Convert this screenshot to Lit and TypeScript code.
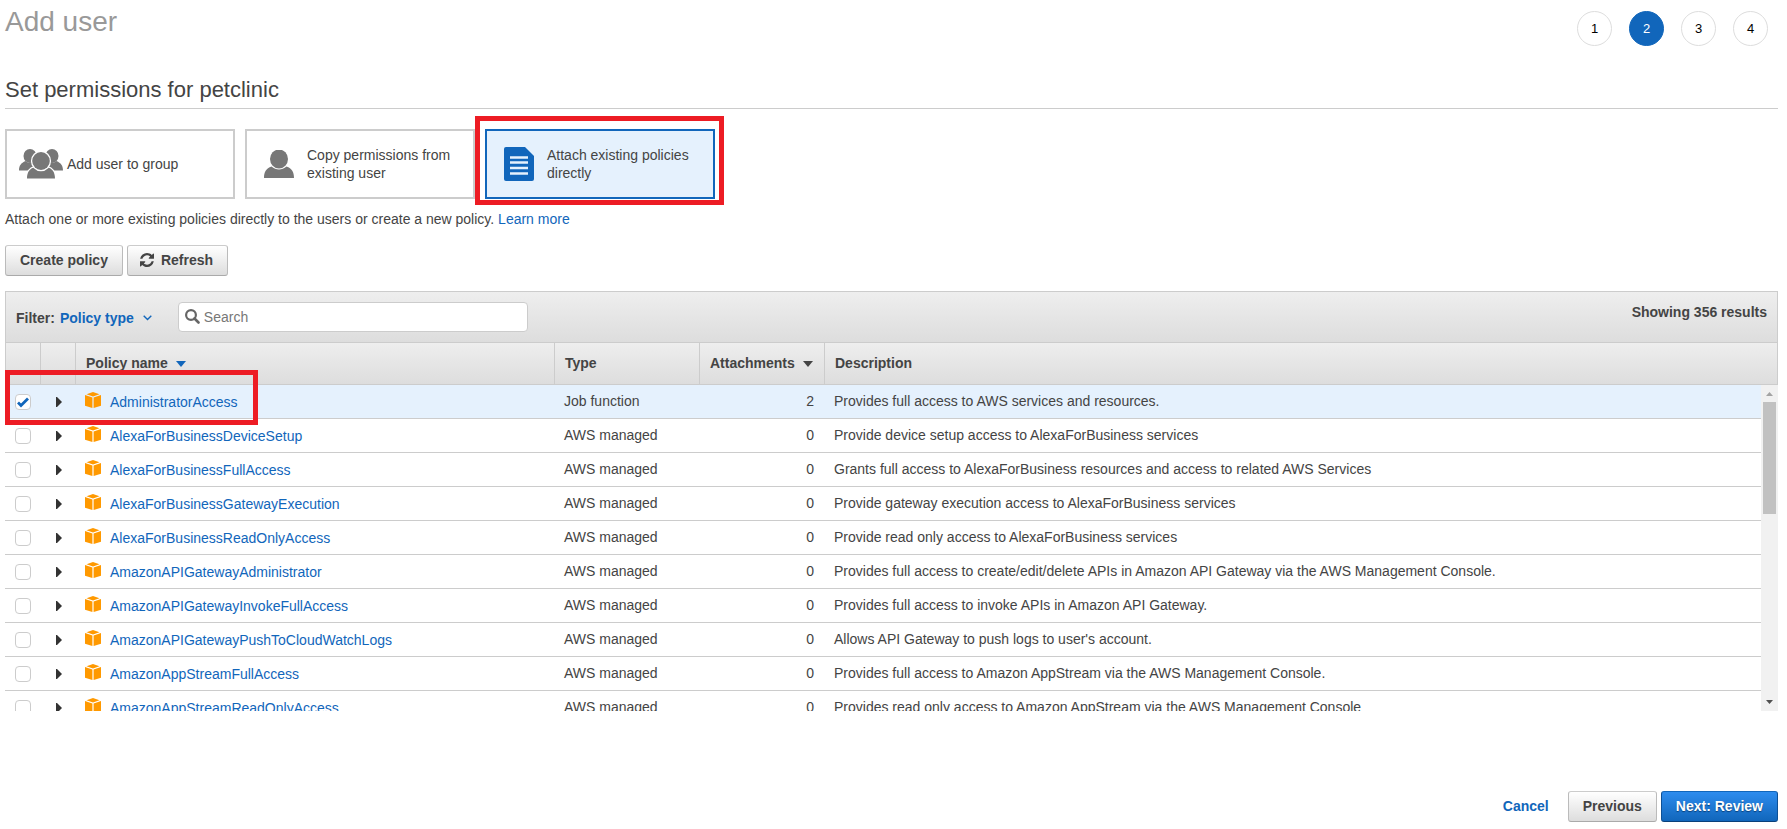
import { LitElement, html, css, svg } from "lit";
import { customElement, state } from "lit/decorators.js";
import { classMap } from "lit/directives/class-map.js";

interface Policy {
  name: string;
  type: string;
  attachments: number;
  description: string;
}

const MANAGED = "AWS managed";

const POLICIES: Policy[] = [
  { name: "AdministratorAccess", type: "Job function", attachments: 2, description: "Provides full access to AWS services and resources." },
  { name: "AlexaForBusinessDeviceSetup", type: MANAGED, attachments: 0, description: "Provide device setup access to AlexaForBusiness services" },
  { name: "AlexaForBusinessFullAccess", type: MANAGED, attachments: 0, description: "Grants full access to AlexaForBusiness resources and access to related AWS Services" },
  { name: "AlexaForBusinessGatewayExecution", type: MANAGED, attachments: 0, description: "Provide gateway execution access to AlexaForBusiness services" },
  { name: "AlexaForBusinessReadOnlyAccess", type: MANAGED, attachments: 0, description: "Provide read only access to AlexaForBusiness services" },
  { name: "AmazonAPIGatewayAdministrator", type: MANAGED, attachments: 0, description: "Provides full access to create/edit/delete APIs in Amazon API Gateway via the AWS Management Console." },
  { name: "AmazonAPIGatewayInvokeFullAccess", type: MANAGED, attachments: 0, description: "Provides full access to invoke APIs in Amazon API Gateway." },
  { name: "AmazonAPIGatewayPushToCloudWatchLogs", type: MANAGED, attachments: 0, description: "Allows API Gateway to push logs to user's account." },
  { name: "AmazonAppStreamFullAccess", type: MANAGED, attachments: 0, description: "Provides full access to Amazon AppStream via the AWS Management Console." },
  { name: "AmazonAppStreamReadOnlyAccess", type: MANAGED, attachments: 0, description: "Provides read only access to Amazon AppStream via the AWS Management Console" },
];

const groupIcon = html`<svg class="icon" width="44" height="30" viewBox="0 0 44 30" aria-hidden="true">
  ${svg`<g fill="#777">
    <ellipse cx="11" cy="7" rx="6.500" ry="7"/>
    <path d="M0 21.500c0-5 2-7.500 6.500-9.500c3 2.500 6 2.500 9 0l4 3v6.500z"/>
    <ellipse cx="33" cy="7" rx="6.500" ry="7"/>
    <path d="M44 21.500c0-5-2-7.500-6.500-9.500c-3 2.500-6 2.500-9 0l-4 3v6.500z"/>
  </g>
  <g fill="#777" stroke="#fff" stroke-width="2.600" paint-order="stroke">
    <path d="M8 29.500c0-6 2.500-10 8-11.500c4 3 8 3 12 0c5.500 1.500 8 5.500 8 11.500z"/>
    <ellipse cx="22" cy="12" rx="8.800" ry="9"/>
  </g>`}
</svg>`;

const personIcon = html`<svg class="icon" width="30" height="28" viewBox="0 0 30 28" aria-hidden="true">
  ${svg`<ellipse cx="15" cy="9" rx="9" ry="9.500" fill="#777"/>
  <path d="M0 28c0-6 2-9.500 7.500-11.500c4.500 4 10.500 4 15 0c5.500 2 7.500 5.500 7.500 11.500z" fill="#777"/>`}
</svg>`;

const documentIcon = html`<svg class="icon" width="30" height="34" viewBox="0 0 30 34" aria-hidden="true">
  ${svg`<path d="M2 0h19l9 9v23a2 2 0 0 1-2 2H2a2 2 0 0 1-2-2V2a2 2 0 0 1 2-2z" fill="#16b"/>
  <path d="M6 10.500h18M6 15.500h18M6 21h18M6 26.500h18" stroke="#e5f1fd" stroke-width="2.500"/>`}
</svg>`;

const refreshIcon = html`<svg class="refresh-icon" width="14" height="14" viewBox="0 0 1536 1536" aria-hidden="true">
  <path fill="#444" d="M1511 928q0 5-1 7-64 268-268 434.500T764 1536q-146 0-282.500-55T238 1324l-129 129q-19 19-45 19t-45-19-19-45V960q0-26 19-45t45-19h448q26 0 45 19t19 45-19 45l-137 137q71 66 161 102t187 36q134 0 250-65t186-179q11-17 53-117 8-23 30-23h192q13 0 22.500 9.500t9.500 22.500zm25-800v448q0 26-19 45t-45 19h-448q-26 0-45-19t-19-45 19-45l138-138Q969 256 768 256q-134 0-250 65T332 500q-11 17-53 117-8 23-30 23H50q-13 0-22.500-9.500T18 608v-7q65-268 270-434.500T768 0q146 0 284 55.500T1297 212l130-129q19-19 45-19t45 19 19 45z"/>
</svg>`;

const searchIcon = html`<svg class="search-icon" width="15" height="15" viewBox="0 0 15 15" aria-hidden="true">
  <circle cx="6" cy="6" r="4.900" fill="none" stroke="#666" stroke-width="2.200"/>
  <path d="M9.500 9.500l4 4" stroke="#666" stroke-width="2.600" stroke-linecap="round"/>
</svg>`;

const cubeIcon = html`<svg class="cube" width="16" height="16" viewBox="0 0 16 16" aria-hidden="true">
  <path fill="#f90" d="M8 0l6.500 2.200L8 4.400 1.500 2.200zM0 3l7.400 2.500V16L0 13.800zM16 3L8.600 5.500V16l7.400-2.200z"/>
</svg>`;

const caretIcon = html`<svg class="caret" width="10" height="6" viewBox="0 0 10 6" aria-hidden="true">
  <path fill="currentColor" d="M0 0h10L5 6z"/>
</svg>`;

@customElement("app-root")
export class AppRoot extends LitElement {
  @state() private method = 2;
  @state() private selected = new Set<string>(["AdministratorAccess"]);

  static styles = css`
    :host {
      display: block;
      box-sizing: border-box;
      padding: 5px 9px 7px 5px;
      color: #444;
      background: #fff;
      font: 14px/18px "Liberation Sans", Arial, sans-serif;
    }
    * { box-sizing: border-box; }
    h1, h2, p, ol { margin: 0; padding: 0; font-weight: normal; }
    a { color: #16b; text-decoration: none; }
    svg { flex: none; display: block; }
    button, input { font: inherit; color: inherit; margin: 0; }
    button { cursor: pointer; }

    .top { display: flex; justify-content: space-between; align-items: flex-start; }
    .title { font-size: 28px; line-height: 34px; color: #999; }
    .steps { display: flex; gap: 17px; padding: 6px 10px 0 0; list-style: none; }
    .step {
      width: 35px; height: 35px;
      display: grid; place-items: center;
      border: 1px solid #ddd; border-radius: 50%;
      font-size: 13px; color: #000;
    }
    .step.current { background: #16b; border-color: #16b; color: #fff; }

    .heading {
      margin-top: 31px; padding-bottom: 5px;
      font-size: 22px; line-height: 26px;
      border-bottom: 1px solid #ccc;
    }

    .methods { display: flex; gap: 10px; margin-top: 20px; }
    .method-slot { position: relative; }
    .method {
      display: flex; align-items: center;
      width: 230px; height: 70px; padding: 0 12px 0 17px;
      border: 2px solid #ccc; background: #fff; text-align: left;
    }
    .method.narrow { padding-left: 12px; }
    .method .label { margin-left: 13px; }
    .method.narrow .label { margin-left: 4px; }
    .method.active { border-color: #16b; background: #e5f1fd; }
    .mark { position: absolute; border: 5px solid #ed1c24; pointer-events: none; z-index: 1; }
    .mark.around-method { inset: -13px -9px -6px -10px; }
    .mark.around-row { left: 0; top: -15px; width: 253px; height: 55px; }

    .hint { margin-top: 11px; }
    .actions { display: flex; gap: 4px; margin-top: 17px; }
    .btn {
      display: flex; align-items: center; justify-content: center; gap: 7px;
      height: 31px; padding: 0 14px 2px;
      border: 1px solid; border-color: #ccc #bbb #aaa; border-radius: 3px;
      background: linear-gradient(#fff, #ddd);
      font-weight: bold;
    }
    .btn.with-icon { padding-left: 12px; }
    .btn.primary {
      color: #fff; border-color: #16b #0d5096 #0a407a;
      background: linear-gradient(#2d8cee, #16b);
      text-shadow: 0 1px 1px #0a407a;
    }

    .bar {
      display: flex; align-items: flex-start;
      margin-top: 15px; padding: 10px 10px 8px;
      border: 1px solid #ccc;
      background: linear-gradient(#eee, #ddd);
      font-weight: bold;
    }
    .filter { display: flex; align-items: center; height: 32px; gap: 5px; }
    .filter-type {
      display: flex; align-items: center; gap: 9px;
      padding: 0; border: 0; background: none; color: #16b; font-weight: bold;
    }
    .search {
      display: flex; align-items: center; gap: 4px;
      width: 350px; height: 30px; margin-left: 26px; padding: 0 6px;
      border: 1px solid #ccc; border-radius: 4px; background: #fff;
    }
    .search-icon { margin-bottom: 2px; }
    .search input {
      flex: 1; min-width: 0; padding: 0; border: 0; outline: 0;
      background: none; font-weight: normal;
    }
    .search input::placeholder { color: #777; opacity: 1; }
    .count { margin-left: auto; padding-top: 1px; }

    table { width: 100%; table-layout: fixed; border-collapse: separate; border-spacing: 0; }
    th, td { padding: 0; text-align: left; white-space: nowrap; overflow: hidden; }
    .head { border: 1px solid #ccc; border-top: 0; background: linear-gradient(#eee, #ddd); }
    .head th { height: 41px; padding: 0 10px 2px; border-right: 1px solid #ccc; }
    .head th:last-child { border-right: 0; }
    .head .c-tick, .body .c-arrow, .head .c-arrow { width: 35px; }
    .body .c-tick { width: 36px; }
    .c-name { width: 479px; }
    .c-type { width: 145px; }
    .c-att { width: 125px; }
    .th-label { display: flex; align-items: center; gap: 8px; }
    .caret { margin-top: 2px; }
    .caret-blue { color: #16b; }

    .list { position: relative; display: flex; height: 326px; }
    .scroller { flex: 1; min-width: 0; overflow-y: scroll; scrollbar-width: none; }
    .body td { height: 34px; padding: 0 10px 2px 9px; border-bottom: 1px solid #ccc; }
    .body .picked td { background: #e5f1fd; }
    .body td.c-tick, .body td.c-arrow { padding: 0; }
    .body td.c-name { padding-bottom: 0; }
    .body td.c-tick { padding-left: 10px; }
    .body td.c-att { text-align: right; padding-right: 11px; }
    .tick {
      display: block; width: 16px; height: 16px;
      appearance: none; border: 1px solid #ccc; border-radius: 4px; background: #fff;
    }
    .tick:checked {
      background: #fff url("data:image/svg+xml,%3Csvg xmlns='http://www.w3.org/2000/svg' viewBox='0 0 14 14'%3E%3Cpath d='M2 7.500l3 3L12 3.500' fill='none' stroke='%231166bb' stroke-width='2.800'/%3E%3C/svg%3E") center / 14px 14px no-repeat;
    }
    .expand { display: block; margin-left: 15px; padding: 0; border: 0; background: none; }
    .policy { display: flex; align-items: center; gap: 9px; }
    .cube { margin-bottom: 4px; }
    .policy a { padding-top: 1px; }

    .scrollbar {
      width: 17px; display: flex; flex-direction: column; align-items: center;
      background: #f1f1f1;
    }
    .scrollbar svg { width: 17px; height: 17px; }
    .track { flex: 1; width: 13px; }
    .thumb { height: 112px; background: #c1c1c1; }

    .footer { display: flex; justify-content: flex-end; align-items: center; gap: 4px; margin-top: 80px; }
    .cancel { font-weight: bold; margin-right: 15px; padding-bottom: 2px; }
  `;

  private toggle(name: string) {
    const next = new Set(this.selected);
    if (!next.delete(name)) next.add(name);
    this.selected = next;
  }

  private renderMethod(index: number, label: string, icon: unknown) {
    const active = this.method === index;
    return html`<div class="method-slot">
      <button
        class=${classMap({ method: true, active, narrow: index === 0 })}
        aria-pressed=${active ? "true" : "false"}
        @click=${() => (this.method = index)}
      >${icon}<span class="label">${label}</span></button>
      ${active ? html`<div class="mark around-method"></div>` : ""}
    </div>`;
  }

  private renderRow(p: Policy) {
    const picked = this.selected.has(p.name);
    return html`<tr class=${classMap({ picked })}>
      <td class="c-tick">
        <input class="tick" type="checkbox" aria-label=${p.name} .checked=${picked} @change=${() => this.toggle(p.name)} />
      </td>
      <td class="c-arrow">
        <button class="expand" aria-label="Expand ${p.name}">
          <svg width="6" height="10" viewBox="0 0 6 10"><path d="M0 0h1l5 5-5 5H0z" fill="#333"/></svg>
        </button>
      </td>
      <td class="c-name"><div class="policy">${cubeIcon}<a href="#">${p.name}</a></div></td>
      <td class="c-type">${p.type}</td>
      <td class="c-att">${p.attachments}</td>
      <td>${p.description}</td>
    </tr>`;
  }

  render() {
    return html`
      <header class="top">
        <h1 class="title">Add user</h1>
        <ol class="steps">
          ${[1, 2, 3, 4].map((n) => html`<li class=${classMap({ step: true, current: n === 2 })}>${n}</li>`)}
        </ol>
      </header>
      <h2 class="heading">Set permissions for petclinic</h2>
      <div class="methods">
        ${this.renderMethod(0, "Add user to group", groupIcon)}
        ${this.renderMethod(1, "Copy permissions from existing user", personIcon)}
        ${this.renderMethod(2, "Attach existing policies directly", documentIcon)}
      </div>
      <p class="hint">
        Attach one or more existing policies directly to the users or create a new policy.
        <a href="#">Learn more</a>
      </p>
      <div class="actions">
        <button class="btn">Create policy</button>
        <button class="btn with-icon">${refreshIcon}Refresh</button>
      </div>

      <div class="bar">
        <div class="filter">
          <span>Filter:</span>
          <button class="filter-type">Policy type
            <svg width="9" height="6" viewBox="0 0 9 6" aria-hidden="true">
              <path d="M.7.8l3.800 3.800L8.300.8" fill="none" stroke="#16b" stroke-width="1.400"/>
            </svg>
          </button>
        </div>
        <label class="search">
          ${searchIcon}
          <input type="text" placeholder="Search" aria-label="Search" />
        </label>
        <span class="count">Showing 356 results</span>
      </div>
      <div class="head">
        <table>
          <thead>
            <tr>
              <th class="c-tick"></th>
              <th class="c-arrow"></th>
              <th class="c-name"><span class="th-label">Policy name <span class="caret-blue">${caretIcon}</span></span></th>
              <th class="c-type">Type</th>
              <th class="c-att"><span class="th-label">Attachments ${caretIcon}</span></th>
              <th>Description</th>
            </tr>
          </thead>
        </table>
      </div>
      <div class="list">
        <div class="scroller">
          <table class="body">
            <tbody>${POLICIES.map((p) => this.renderRow(p))}</tbody>
          </table>
        </div>
        <div class="scrollbar" aria-hidden="true">
          <svg viewBox="0 0 17 17"><path d="M5 11l3.500-4 3.500 4z" fill="#a3a3a3"/></svg>
          <div class="track"><div class="thumb"></div></div>
          <svg viewBox="0 0 17 17"><path d="M5 6l3.500 4L12 6z" fill="#505050"/></svg>
        </div>
        <div class="mark around-row"></div>
      </div>

      <footer class="footer">
        <a class="cancel" href="#">Cancel</a>
        <button class="btn">Previous</button>
        <button class="btn primary">Next: Review</button>
      </footer>
    `;
  }
}
